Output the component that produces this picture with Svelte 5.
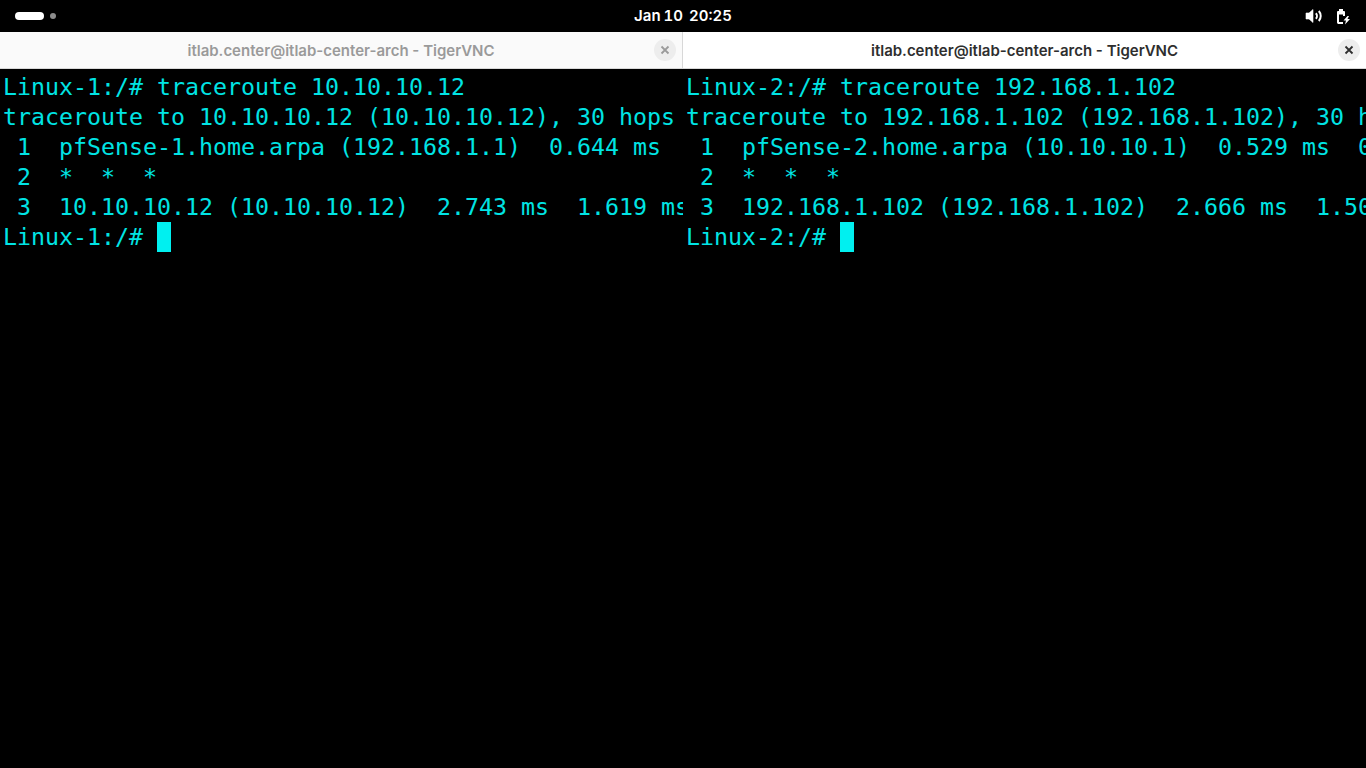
<script lang="ts">
  const title = 'itlab.center@itlab-center-arch - TigerVNC';

  const panes = [
    {
      active: false,
      prompt: 'Linux-1:/# ',
      lines: [
        'Linux-1:/# traceroute 10.10.10.12',
        'traceroute to 10.10.10.12 (10.10.10.12), 30 hops',
        ' 1  pfSense-1.home.arpa (192.168.1.1)  0.644 ms',
        ' 2  *  *  *',
        ' 3  10.10.10.12 (10.10.10.12)  2.743 ms  1.619 ms'
      ]
    },
    {
      active: true,
      prompt: 'Linux-2:/# ',
      lines: [
        'Linux-2:/# traceroute 192.168.1.102',
        'traceroute to 192.168.1.102 (192.168.1.102), 30 h',
        ' 1  pfSense-2.home.arpa (10.10.10.1)  0.529 ms  0',
        ' 2  *  *  *',
        ' 3  192.168.1.102 (192.168.1.102)  2.666 ms  1.50'
      ]
    }
  ];
</script>

<div class="screen">
  <header class="topbar">
    <div class="workspaces">
      <span class="pill"></span>
      <span class="dot"></span>
    </div>
    <div class="clock">Jan 10&nbsp; 20:25</div>
    <div class="status">
      <svg width="18" height="16" viewBox="0 0 18 16">
        <path d="M1 5h3l4-3.500v13L4 11H1z" fill="#fff" stroke="#fff" stroke-width=".6" stroke-linejoin="round" />
        <path d="M10.800 5.200a4 4 0 0 1 0 5.600M13.800 3a7.500 7.500 0 0 1 0 10" fill="none" stroke="#fff" stroke-width="2" />
      </svg>
      <svg width="16" height="17" viewBox="0 0 16 17">
        <rect x="4" y="1" width="4" height="3" fill="#fff" />
        <rect x="2" y="3" width="8" height="3.500" rx="1" fill="#fff" />
        <path d="M3 5v9.300a.7.700 0 0 0 .7.700H8M9 5v3" fill="none" stroke="#fff" stroke-width="2" />
        <path d="M12.500 8L8.500 12.500H11L10 16.500l5-5.500h-2.500l1.500-3z" fill="#fff" />
      </svg>
    </div>
  </header>

  <main class="panes">
    {#each panes as pane}
      <section class="pane" class:active={pane.active}>
        <div class="titlebar">
          <span class="title">{title}</span>
          <button class="close" aria-label="Close">
            <svg width="10" height="10" viewBox="0 0 10 10">
              <path d="M1.500 1.500l7 7M8.500 1.500l-7 7" stroke="currentColor" stroke-width="1.800" />
            </svg>
          </button>
        </div>
        <pre class="terminal">{#each pane.lines as line}<div class="line">{line}</div>{/each}<div class="line">{pane.prompt}<span class="cursor"></span></div></pre>
      </section>
    {/each}
  </main>
</div>

<style>
  :global(body) {
    margin: 0;
    background: #000;
  }

  .screen {
    display: flex;
    flex-direction: column;
    width: 1366px;
    height: 768px;
    overflow: hidden;
    background: #000;
  }

  .topbar {
    display: grid;
    grid-template-columns: 1fr auto 1fr;
    align-items: center;
    height: 32px;
    flex: none;
    padding: 0 15px;
    box-sizing: border-box;
    color: #fff;
    font-family: Inter, "Liberation Sans", sans-serif;
    font-size: 15px;
    font-weight: 600;
  }

  .clock {
    line-height: 31px;
    height: 32px;
    font-variant-numeric: tabular-nums;
    word-spacing: -1px;
  }

  .workspaces {
    display: flex;
    align-items: center;
    gap: 6px;
  }

  .pill {
    width: 29px;
    height: 8px;
    border-radius: 4px;
    background: #fff;
  }

  .dot {
    width: 6px;
    height: 6px;
    border-radius: 50%;
    background: #8c8c8c;
  }

  .status {
    display: flex;
    justify-content: flex-end;
    align-items: center;
    gap: 12px;
  }

  .panes {
    display: flex;
    flex: 1;
    min-height: 0;
  }

  .pane {
    display: flex;
    flex-direction: column;
    width: 683px;
    min-width: 0;
  }

  .titlebar {
    display: flex;
    align-items: center;
    justify-content: center;
    position: relative;
    height: 37px;
    box-sizing: border-box;
    flex: none;
    background: #fafafa;
    border-bottom: 1px solid #d8d8d8;
    border-right: 1px solid #d8d8d8;
    color: #9a9a9a;
    font-family: Inter, "Liberation Sans", sans-serif;
    font-size: 15px;
    font-weight: 600;
  }

  .pane.active .titlebar {
    background: #fff;
    border-right: none;
    color: #2e2e2e;
  }

  .close {
    position: absolute;
    right: 6px;
    top: 7px;
    width: 22px;
    height: 22px;
    padding: 0;
    border: none;
    border-radius: 50%;
    display: flex;
    align-items: center;
    justify-content: center;
    background: #ededed;
    color: inherit;
  }

  .terminal {
    margin: 0;
    flex: 1;
    padding: 3px 0 0 3px;
    overflow: hidden;
    background: #000;
    color: #00e4e4;
    font-family: "DejaVu Sans Mono", monospace;
    font-size: 23.250px;
    line-height: 30px;
  }

  .line {
    height: 30px;
    white-space: pre;
  }

  .cursor {
    display: inline-block;
    width: 14px;
    height: 30px;
    vertical-align: top;
    background: #00f0f0;
  }
</style>
